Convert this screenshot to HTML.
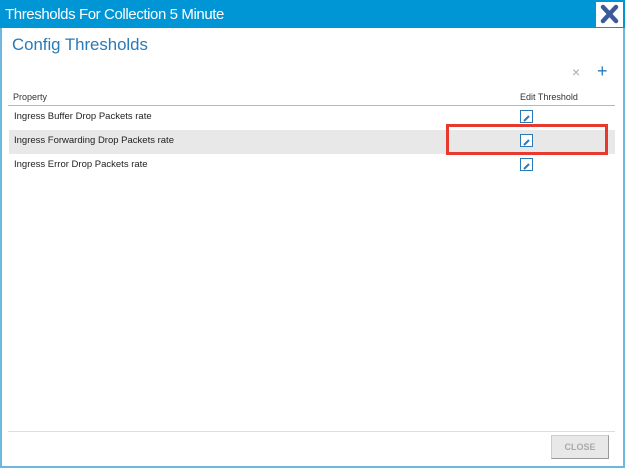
<!DOCTYPE html>
<html><head><style>
body{margin:0;width:628px;height:470px;background:#fff;font-family:"Liberation Sans",Arial,sans-serif;position:relative;overflow:hidden}
.dlg{position:absolute;left:0;top:0;width:621px;height:466px;border:2px solid #6fb7dd;border-top:none}
.hdr{position:absolute;left:0;top:0;width:625px;height:28px;background:#0096d6;color:#fff;font-size:15px;letter-spacing:-0.4px;line-height:29px;padding-left:5px;box-sizing:border-box}
.x{position:absolute;left:596px;top:2px;width:27px;height:25px;background:#fff}
.ab{position:absolute}
.row{position:absolute;left:9px;width:606px;height:24px;font-size:9.5px;line-height:22px;padding-left:5px;box-sizing:border-box;color:#222}
.ed{position:absolute;left:511px;top:4px;width:11px;height:11px;border:1px solid #2a7ab8;background:#fff}
</style></head><body>
<div class="dlg"></div>
<div class="hdr">Thresholds For Collection 5 Minute</div>
<div class="x"><svg width="27" height="25"><path d="M7 5 L20 19 M20 5 L7 19" stroke="#3a5a9a" stroke-width="4.5" stroke-linecap="round"/></svg></div>
<div class="ab" style="left:12px;top:35px;font-size:16.8px;color:#2a7ab8">Config Thresholds</div>
<div class="ab" style="left:572px;top:64px;font-size:14px;color:#aaa">×</div>
<div class="ab" style="left:597px;top:61px;font-size:18px;color:#2a7ab8">+</div>
<div class="ab" style="left:13px;top:92px;font-size:9px;color:#333">Property</div>
<div class="ab" style="left:520px;top:92px;font-size:9px;color:#333">Edit Threshold</div>
<div class="ab" style="left:8px;top:105px;width:607px;height:1px;background:#8cc6e4"></div>
<div class="row" style="top:106px">Ingress Buffer Drop Packets rate<div class="ed"><svg width="11" height="11"><path d="M3 8 L8 3" stroke="#2a7ab8" stroke-width="2"/></svg></div></div>
<div class="row" style="top:130px;background:#e8e8e8">Ingress Forwarding Drop Packets rate<div class="ed"><svg width="11" height="11"><path d="M3 8 L8 3" stroke="#2a7ab8" stroke-width="2"/></svg></div></div>
<div class="row" style="top:154px">Ingress Error Drop Packets rate<div class="ed"><svg width="11" height="11"><path d="M3 8 L8 3" stroke="#2a7ab8" stroke-width="2"/></svg></div></div>
<div class="ab" style="left:446px;top:124px;width:156px;height:25px;border:3px solid #e8392f"></div>
<div class="ab" style="left:8px;top:431px;width:607px;height:1px;background:#ddd"></div>
<div class="ab" style="left:551px;top:435px;width:56px;height:22px;background:#e8e8e8;border:1px solid #ccc;border-right-color:#999;border-bottom-color:#999;color:#aaa;font-size:9px;font-weight:bold;text-align:center;line-height:22px">CLOSE</div>
</body></html>
